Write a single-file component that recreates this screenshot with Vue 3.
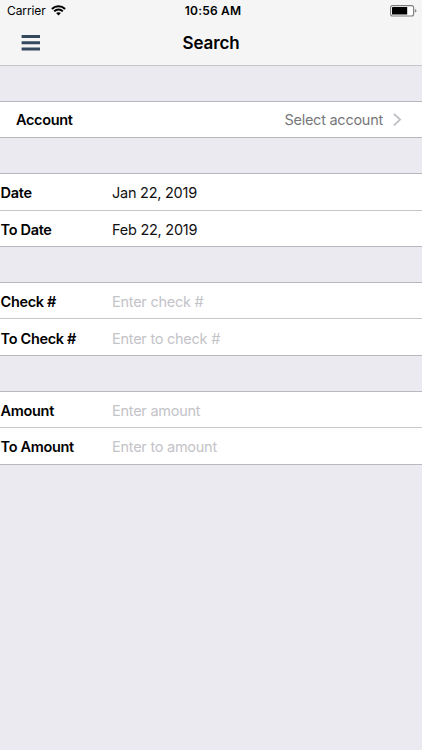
<script setup>
const groups = [
  {
    name: 'date',
    rows: [
      { label: 'Date', value: 'Jan 22, 2019', filled: true },
      { label: 'To Date', value: 'Feb 22, 2019', filled: true },
    ],
  },
  {
    name: 'check',
    rows: [
      { label: 'Check #', value: 'Enter check #' },
      { label: 'To Check #', value: 'Enter to check #' },
    ],
  },
  {
    name: 'amount',
    rows: [
      { label: 'Amount', value: 'Enter amount' },
      { label: 'To Amount', value: 'Enter to amount' },
    ],
  },
]
</script>

<template>
  <main class="screen">
    <header class="top">
      <div class="status">
        <div class="carrier">
          <span>Carrier</span>
          <svg class="wifi" width="15" height="11" viewBox="0 0 15 11">
            <path d="M.9 4 C4.6 .4 10.4 .4 14.1 4" />
            <path d="M3.2 6.4 C5.6 4 9.4 4 11.8 6.4" />
            <path class="dot" d="M5.1 8.1 C6.5 6.8 8.5 6.8 9.9 8.1 L7.5 10.6 Z" />
          </svg>
        </div>
        <span class="time">10:56 AM</span>
        <svg class="battery" width="27" height="12" viewBox="0 0 27 12">
          <rect class="shell" x=".6" y=".6" width="23" height="10.4" rx="2" />
          <rect x="2" y="2" width="15.2" height="7.6" rx=".4" />
          <path class="cap" d="M24.8 4 C27 4.3 27 7.3 24.8 7.6 Z" />
        </svg>
      </div>
      <nav class="nav">
        <svg class="menu" width="19" height="17" viewBox="0 0 19 17">
          <path d="M.6 1.5 H19 M.6 7.7 H19 M.6 14 H19" />
        </svg>
        <h1>Search</h1>
      </nav>
    </header>

    <section class="group">
      <div class="row account">
        <span class="label">Account</span>
        <span class="select">Select account</span>
        <svg class="chevron" width="9" height="14" viewBox="0 0 9 14">
          <path d="M.9 .8 L7.1 6.6 L.9 12.4" />
        </svg>
      </div>
    </section>

    <section v-for="g in groups" :key="g.name" class="group" :class="g.name">
      <div v-for="r in g.rows" :key="r.label" class="row">
        <span class="label">{{ r.label }}</span>
        <span class="value" :class="{ filled: r.filled }">{{ r.value }}</span>
      </div>
    </section>
  </main>
</template>

<style>
body {
  margin: 0;
  background: #ebeaf0;
}
</style>

<style scoped>
.screen {
  box-sizing: border-box;
  width: 422px;
  height: 750px;
  overflow: hidden;
  background: #ebeaf0;
  font-family: Inter, "Liberation Sans", sans-serif;
  color: #000;
}
.top {
  box-sizing: border-box;
  height: 66px;
  background: #f5f5f6;
  border-bottom: 1px solid #c6c5cb;
}
.status {
  display: grid;
  grid-template-columns: 1fr auto 1fr;
  align-items: center;
  height: 21px;
  padding: 0 5px 0 7px;
  font-size: 12px;
}
.carrier {
  display: flex;
  align-items: center;
  gap: 5px;
  letter-spacing: -0.1px;
}
.wifi path {
  fill: none;
  stroke: #000;
  stroke-width: 2;
}
.wifi .dot {
  fill: #000;
  stroke: none;
}
.time {
  padding-left: 2px;
  font-weight: 600;
  letter-spacing: 0.2px;
}
.battery {
  justify-self: end;
}
.battery .shell {
  fill: #fff;
  stroke: #7d7d7f;
  stroke-width: 1.1;
}
.battery .cap {
  fill: #8a8a8c;
}
.nav {
  display: grid;
  grid-template-columns: 1fr auto 1fr;
  align-items: center;
  height: 44px;
  padding: 0 21px;
}
.menu path {
  stroke: #35495e;
  stroke-width: 3;
}
h1 {
  margin: 0;
  font-size: 17px;
  font-weight: 600;
  letter-spacing: -0.15px;
}
.group {
  margin-top: 35px;
  background: #fff;
  border-top: 1px solid #b9b8be;
  border-bottom: 1px solid #b9b8be;
}
.row {
  box-sizing: border-box;
  display: flex;
  align-items: center;
  height: 36px;
  padding-top: 1px;
  font-size: 14.5px;
}
.row + .row {
  border-top: 1px solid #c8c7cc;
}
.label {
  width: 112px;
  padding-left: 0.6px;
  box-sizing: border-box;
  font-weight: 600;
  letter-spacing: -0.33px;
}
.value {
  color: #c3c3c8;
  letter-spacing: -0.25px;
}
.value.filled {
  color: #111;
}
.check .row:first-child,
.amount .row:first-child {
  height: 35px;
  padding-top: 2px;
}
.check .row + .row {
  height: 37px;
  padding-top: 2px;
}
.amount .row:first-child {
  padding-top: 1px;
}
.amount .row + .row {
  height: 37px;
  padding-top: 1px;
}
.account {
  height: 35px;
  padding: 0 20px 0 15px;
}
.account .label {
  padding-left: 1px;
}
.select {
  margin-left: auto;
  color: #77777a;
  letter-spacing: -0.25px;
}
.chevron {
  margin-left: 10px;
}
.chevron path {
  fill: none;
  stroke: #bcbcc2;
  stroke-width: 1.7;
}
</style>
